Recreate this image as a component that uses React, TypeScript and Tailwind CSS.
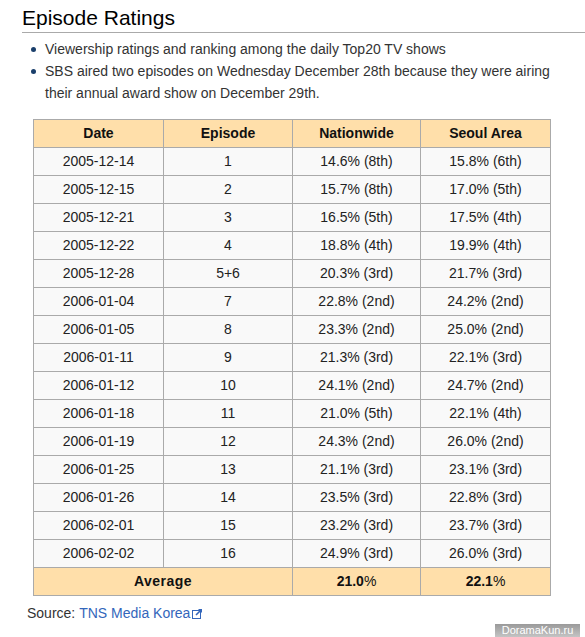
import React from "react";

const rows: [string, string, string, string][] = [
  ["2005-12-14", "1", "14.6% (8th)", "15.8% (6th)"],
  ["2005-12-15", "2", "15.7% (8th)", "17.0% (5th)"],
  ["2005-12-21", "3", "16.5% (5th)", "17.5% (4th)"],
  ["2005-12-22", "4", "18.8% (4th)", "19.9% (4th)"],
  ["2005-12-28", "5+6", "20.3% (3rd)", "21.7% (3rd)"],
  ["2006-01-04", "7", "22.8% (2nd)", "24.2% (2nd)"],
  ["2006-01-05", "8", "23.3% (2nd)", "25.0% (2nd)"],
  ["2006-01-11", "9", "21.3% (3rd)", "22.1% (3rd)"],
  ["2006-01-12", "10", "24.1% (2nd)", "24.7% (2nd)"],
  ["2006-01-18", "11", "21.0% (5th)", "22.1% (4th)"],
  ["2006-01-19", "12", "24.3% (2nd)", "26.0% (2nd)"],
  ["2006-01-25", "13", "21.1% (3rd)", "23.1% (3rd)"],
  ["2006-01-26", "14", "23.5% (3rd)", "22.8% (3rd)"],
  ["2006-02-01", "15", "23.2% (3rd)", "23.7% (3rd)"],
  ["2006-02-02", "16", "24.9% (3rd)", "26.0% (3rd)"],
];

const cell = "border border-[#aaaaaa] h-[28px] p-0 text-center align-middle";

export default function App() {
  return (
    <div
      className="relative w-[585px] h-[637px] overflow-hidden bg-white text-[#222222]"
      style={{ fontFamily: '"Liberation Sans", Arial, sans-serif' }}
    >
      <div className="pl-[22px]">
        <h2 className="mt-[6px] text-[21px] leading-[24px] pb-[2px] border-b border-[#aaaaaa] text-black">
          Episode Ratings
        </h2>
        <ul className="mt-[5px] text-[14px] leading-[22px] text-[#333333]">
          <li className="relative pl-[23px]">
            <span className="absolute left-[9px] top-[9px] w-[5px] h-[5px] rounded-full bg-[#1a3f6b]" />
            Viewership ratings and ranking among the daily Top20 TV shows
          </li>
          <li className="relative pl-[23px]">
            <span className="absolute left-[9px] top-[9px] w-[5px] h-[5px] rounded-full bg-[#1a3f6b]" />
            SBS aired two episodes on Wednesday December 28th because they were airing
            <br />
            their annual award show on December 29th.
          </li>
        </ul>
      </div>
      <table className="ml-[33px] mt-[15px] border-collapse text-[14px] text-[#222222] table-fixed w-[517px]">
        <colgroup>
          <col className="w-[130px]" />
          <col className="w-[129px]" />
          <col className="w-[128px]" />
          <col className="w-[130px]" />
        </colgroup>
        <thead>
          <tr className="bg-[#ffdfaa]">
            <th className={cell + " font-bold text-[#111111]"}>Date</th>
            <th className={cell + " font-bold text-[#111111]"}>Episode</th>
            <th className={cell + " font-bold text-[#111111]"}>Nationwide</th>
            <th className={cell + " font-bold text-[#111111]"}>Seoul Area</th>
          </tr>
        </thead>
        <tbody>
          {rows.map((r) => (
            <tr key={r[0]} className="bg-[#f9f9f9]">
              {r.map((c, i) => (
                <td key={i} className={cell}>
                  {c}
                </td>
              ))}
            </tr>
          ))}
          <tr className="bg-[#ffdfaa]">
            <td colSpan={2} className={cell + " font-bold text-[#111111] tracking-[0.5px]"}>
              Average
            </td>
            <td className={cell + " font-bold text-[#111111]"}>
              21.0<span className="font-normal">%</span>
            </td>
            <td className={cell + " font-bold text-[#111111]"}>
              22.1<span className="font-normal">%</span>
            </td>
          </tr>
        </tbody>
      </table>
      <div className="ml-[27px] mt-[7px] text-[14px] leading-[20px] text-[#333333] flex items-center">
        <span>Source:&nbsp;</span>
        <span className="text-[#3366bb]">TNS Media Korea</span>
        <svg className="ml-[2px]" width="11" height="11" viewBox="0 0 11 11">
          <rect x="0.5" y="2.5" width="8" height="8" fill="#fff" stroke="#3366bb" />
          <path d="M4 7 L9.5 1.5" stroke="#3366bb" strokeWidth="1.6" />
          <path d="M6 1 H10 V5 Z" fill="#3366bb" />
        </svg>
      </div>
      <div className="absolute left-[495px] top-[624px] w-[85px] h-[13px] bg-gradient-to-b from-[#9a9a9a] to-[#c4c4c4] text-white text-[11px] leading-[13px] text-center">
        DoramaKun.ru
      </div>
    </div>
  );
}
